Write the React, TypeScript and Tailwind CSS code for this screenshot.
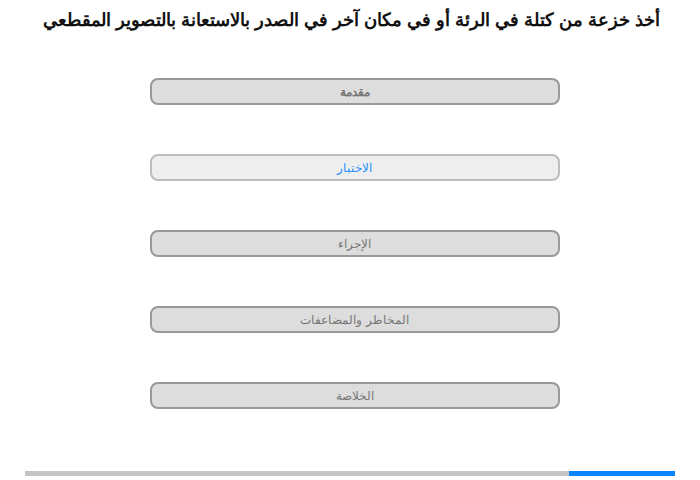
export default function App() {
  const sections = [
    { label: "مقدمة", active: false, bold: true },
    { label: "الاختبار", active: true, bold: false },
    { label: "الإجراء", active: false, bold: false },
    { label: "المخاطر والمضاعفات", active: false, bold: false },
    { label: "الخلاصة", active: false, bold: false },
  ]

  return (
    <div
      dir="rtl"
      className="w-[700px] h-[480px] bg-white flex flex-col items-center font-['Liberation_Sans',Arial,sans-serif]"
    >
      <h1 className="mt-[8px] ml-[2px] text-[18px] leading-[24px] font-bold text-[#111]">
        أخذ خزعة من كتلة في الرئة أو في مكان آخر في الصدر بالاستعانة بالتصوير المقطعي
      </h1>

      {/* section buttons */}
      <div className="mt-[46px] ml-[9px] flex flex-col gap-[49px]">
        {sections.map((s) => (
          <button
            key={s.label}
            className={`w-[410px] h-[27px] rounded-[8px] border-2 flex items-center justify-center text-[12px] leading-none ${
              s.active
                ? "bg-[#eeeeee] border-[#bdbdbd] text-[#1e90ff]"
                : "bg-[#dddddd] border-[#999999] text-[#777777]"
            } ${s.bold ? "font-bold" : ""}`}
          >
            {s.label}
          </button>
        ))}
      </div>

      {/* progress */}
      <div className="mt-auto mb-[4px] w-[650px] h-[5px] bg-[#c4c4c4] flex">
        <div className="w-[106px] h-full bg-[#0a84ff]" />
      </div>
    </div>
  )
}
